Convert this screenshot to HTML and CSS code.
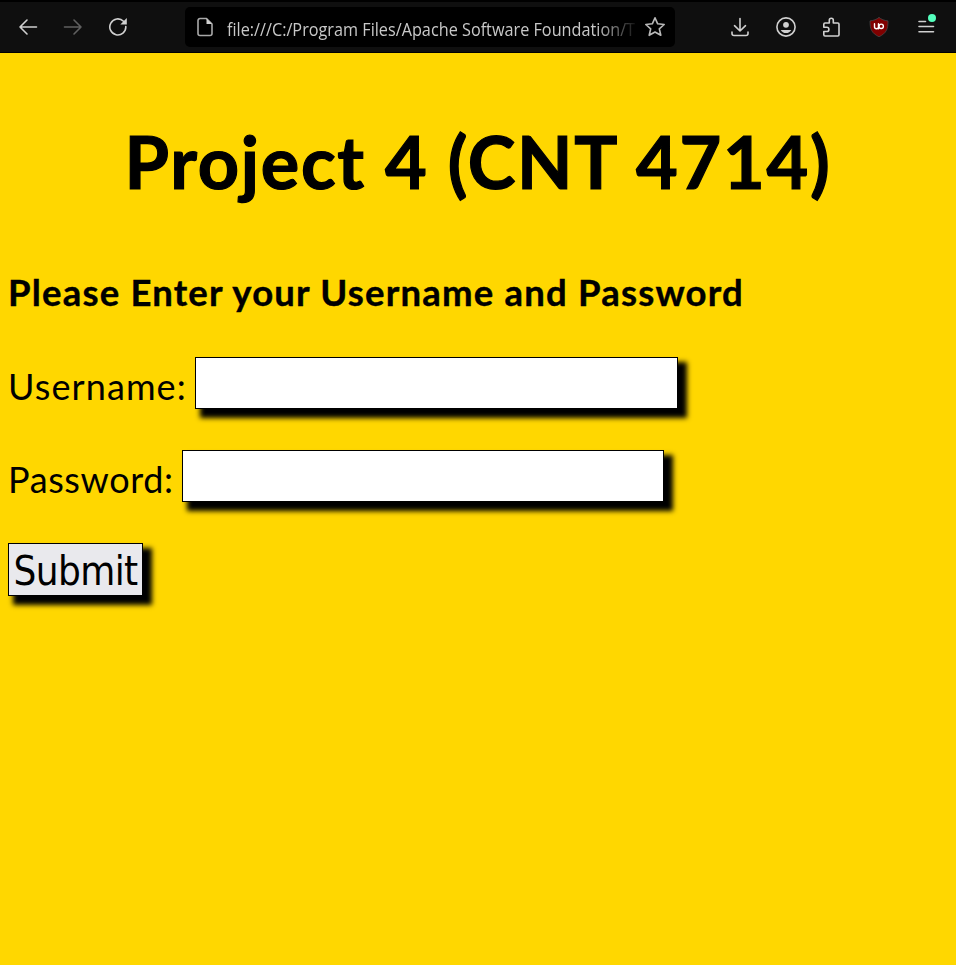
FILE: index.html
```html
<!DOCTYPE html>
<html lang="en">
<head>
<meta charset="utf-8">
<title>Project 4</title>
<link rel="stylesheet" href="styles.css">
</head>
<body>
<header class="toolbar">
  <nav class="nav">
    <svg viewBox="0 0 20 20"><path d="M18.5 10H2M9 3 2 10l7 7"/></svg>
    <svg class="dim" viewBox="0 0 20 20"><path d="M1.500 10H18M11 3l7 7-7 7"/></svg>
    <svg viewBox="0 0 20 20"><path d="M17.800 9.500A8 8 0 1 1 15.500 4.300"/><path class="solid" d="M18.800 1v6.500h-6.500z"/></svg>
  </nav>
  <div class="address">
    <svg class="page" viewBox="0 0 20 20"><path d="M5 1.500h6.500L17 7v9.500a2 2 0 0 1-2 2H5a2 2 0 0 1-2-2v-13a2 2 0 0 1 2-2z"/><path class="solid" d="M11.500 1.500V7H17z"/></svg>
    <div class="url"><span>file:///C:/Program Files/Apache Software Foundation/T</span></div>
    <svg class="star" viewBox="0 0 22 22"><path d="M11 1.800l2.700 6 6.500.7-4.900 4.300 1.500 6.500L11 16l-5.800 3.300 1.500-6.500-4.900-4.300 6.500-.7z"/></svg>
  </div>
  <div class="actions">
    <svg viewBox="0 0 20 20"><path d="M10 1.500V14M4.500 8.700 10 14l5.500-5.300M2 15v1.500a2 2 0 0 0 2 2h12a2 2 0 0 0 2-2V15"/></svg>
    <svg viewBox="0 0 20 20"><circle cx="10" cy="10" r="9.100"/><circle class="solid" cx="10" cy="7.800" r="2.900"/><path class="solid" d="M4.700 12.900h10.600c-1 2-3 3.100-5.300 3.100s-4.300-1.100-5.300-3.100z"/></svg>
    <svg viewBox="0 0 20 20"><path d="M3 6h4.300V3.300a2 2 0 0 1 4 0V6h4.500a1.200 1.200 0 0 1 1.200 1.200v10.600a1.200 1.200 0 0 1-1.200 1.200H3a1.200 1.200 0 0 1-1.200-1.200v-3.300h3a2 2 0 0 0 0-4.200h-3V7.200A1.200 1.200 0 0 1 3 6z"/></svg>
    <svg class="ublock" viewBox="0 0 20 20"><path class="shield" d="M10 .5c2.500 1.900 5 3 9 3.400 0 8.500-1.500 12-9 15.900C2.500 15.900 1 12.400 1 3.900 5 3.500 7.500 2.400 10 .5z"/><path class="mark" d="M5.500 6.800v3a2 2 0 0 0 4 0v-3M9.500 9.800v1.900"/><circle class="mark" cx="12.200" cy="9.300" r="2.200"/></svg>
    <div class="menu">
      <svg viewBox="0 0 20 20"><path d="M3 4.500h6.500M3 9.500h14.500M3 14.800h14.500"/></svg>
      <i class="badge"></i>
    </div>
  </div>
</header>
<main>
  <h1>Project 4 (CNT 4714)</h1>
  <h2>Please Enter your Username and Password</h2>
  <form>
    <div class="row"><label class="user" for="u">Username:</label><input id="u" type="text"></div>
    <div class="row"><label class="pass" for="p">Password:</label><input id="p" class="short" type="password"></div>
    <button type="button">Submit</button>
  </form>
</main>
</body>
</html>
```
FILE: styles.css
```css
* { box-sizing: border-box; }
body { margin: 0; min-height: 100vh; background: #ffd700; color: #000; font-family: Lato, "Liberation Sans", sans-serif; }
.toolbar { height: 53px; display: flex; align-items: center; background: #0f0f0f; border-top: 2px solid #000; border-bottom: 1px solid #000; }
svg { display: block; width: 20px; height: 20px; flex: none; fill: none; stroke: #d0d0d0; stroke-width: 1.6; stroke-linecap: round; stroke-linejoin: round; }
.solid { fill: #d0d0d0; stroke: none; }
.dim { stroke: #606060; }
.page { stroke: #a8a8a8; }
.nav { width: 185px; padding-left: 18px; display: flex; gap: 25px; }
.address { width: 490px; height: 40px; padding: 0 9px 0 10px; display: flex; align-items: center; background: #000; border-radius: 5px; }
.address .star { width: 22px; height: 22px; margin-left: 8px; stroke: #b8b8b8; }
.url { width: 409px; margin-left: 12px; overflow: hidden; white-space: nowrap; color: #c8c8c8; font: 17.500px/40px "Open Sans", sans-serif; padding-top: 3px; -webkit-mask-image: linear-gradient(90deg, #000 370px, transparent 412px); mask-image: linear-gradient(90deg, #000 370px, transparent 412px); }
.url span { display: inline-block; transform: scaleX(.928); transform-origin: left; }
.actions { padding-left: 55px; display: flex; gap: 26px; }
.ublock { margin-left: 1px; }
.menu { position: relative; margin-left: 1px; }
.shield { fill: #800000; stroke: #454545; stroke-width: .8; }
.mark { stroke: #fff; stroke-width: 1.400; }
.badge { position: absolute; left: 12px; top: -3px; width: 8px; height: 8px; border-radius: 50%; background: #54ffbd; }
main { padding: 0 8px; }
h1, h2 { margin: 0; white-space: nowrap; font-weight: 700; }
h1 { padding-top: 59px; text-align: center; font-size: 72px; line-height: 98px; letter-spacing: 1.700px; -webkit-text-stroke: 1.200px #000; }
h2 { padding-top: 57px; font-size: 36.500px; line-height: 51px; letter-spacing: 1.200px; -webkit-text-stroke: .4px #000; }
form { padding-top: 39px; }
.row { display: flex; align-items: center; height: 52px; margin-bottom: 41px; }
label { font-size: 36px; line-height: 52px; padding-top: 6px; white-space: nowrap; }
.user { width: 187px; letter-spacing: 1.100px; }
.pass { width: 174px; letter-spacing: .6px; }
input, button { border: 1px solid #000; border-radius: 0; box-shadow: 7px 7px 5px 2px #000; }
input { width: 483px; height: 52px; padding: 1px 4px; background: #fff; outline: 0; font-size: 36px; }
.short { width: 482px; }
button { display: flex; align-items: center; justify-content: center; width: 135px; height: 53px; padding: 2px 0 0; background: #e9e9ed; color: #000; font: 40px/48px "DejaVu Sans Condensed", "DejaVu Sans", sans-serif; letter-spacing: -.6px; }
```
